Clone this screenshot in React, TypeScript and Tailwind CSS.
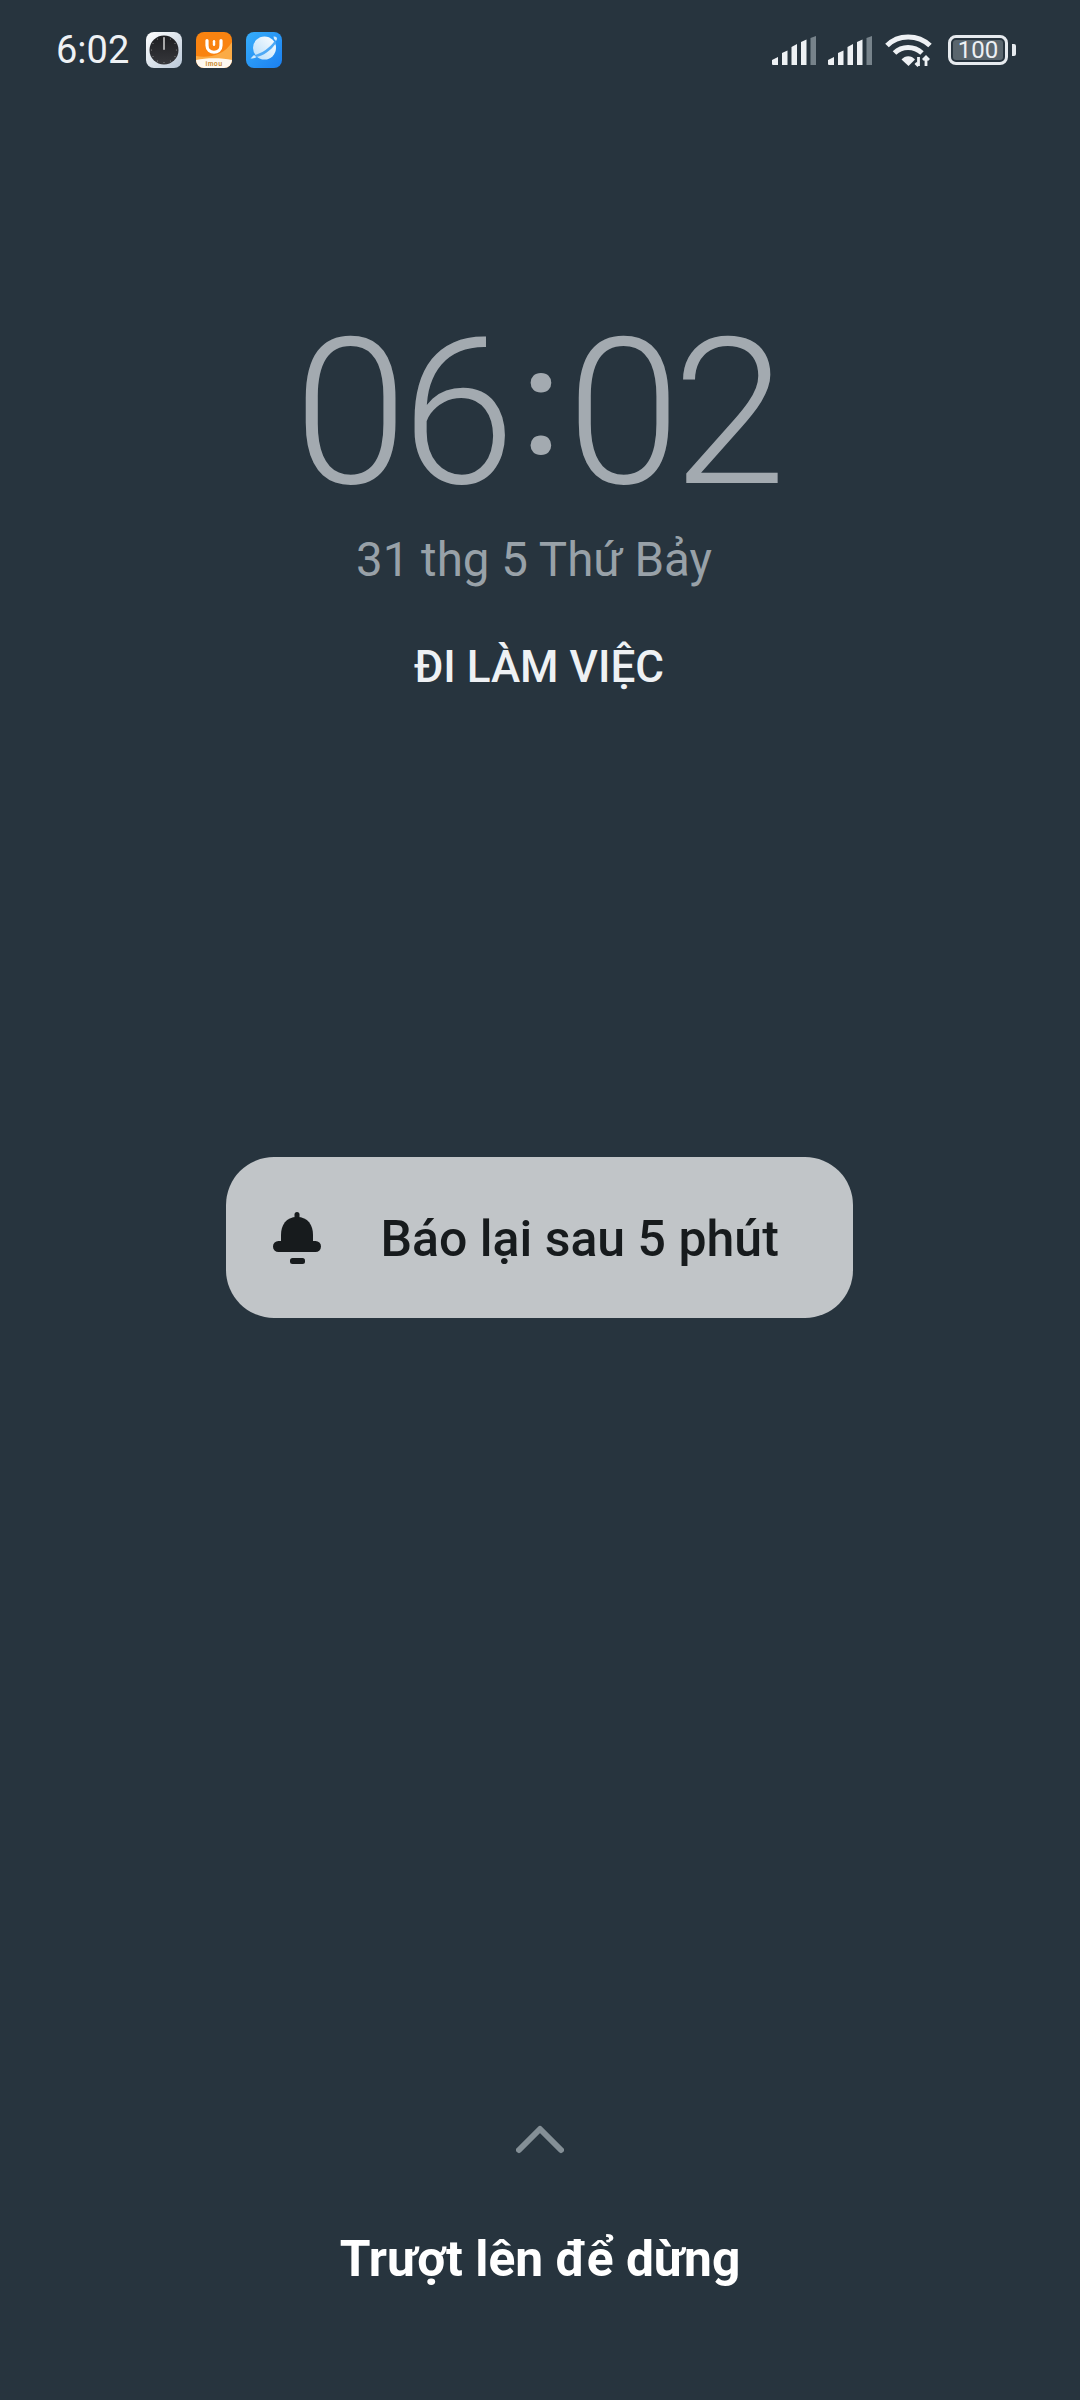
const font = { fontFamily: "Roboto, 'Noto Sans', sans-serif" };

function ClockIcon() {
  return (
    <svg width="36" height="36" viewBox="0 0 36 36">
      <defs>
        <linearGradient id="cg" x1="0" y1="0" x2="1" y2="1">
          <stop offset="0" stopColor="#ffffff" />
          <stop offset="1" stopColor="#b9c8d8" />
        </linearGradient>
        <linearGradient id="cd" x1="0" y1="0" x2="0" y2="1">
          <stop offset="0" stopColor="#1d1e21" />
          <stop offset="1" stopColor="#36373b" />
        </linearGradient>
      </defs>
      <rect width="36" height="36" rx="8" fill="url(#cg)" />
      <circle cx="18" cy="18" r="14.500" fill="url(#cd)" />
      <rect x="17.200" y="5" width="1.600" height="13" rx=".8" fill="#c9c9c9" />
      <g fill="#8b8b8b">
        <circle cx="24.500" cy="7" r=".6" /><circle cx="29" cy="11.500" r=".6" /><circle cx="30.500" cy="18" r=".6" />
        <circle cx="29" cy="24.500" r=".6" /><circle cx="24.500" cy="29" r=".6" /><circle cx="18" cy="30.500" r=".6" />
        <circle cx="11.500" cy="29" r=".6" /><circle cx="7" cy="24.500" r=".6" /><circle cx="5.500" cy="18" r=".6" />
        <circle cx="7" cy="11.500" r=".6" /><circle cx="11.500" cy="7" r=".6" />
      </g>
    </svg>
  );
}

function ImouIcon() {
  return (
    <svg width="36" height="36" viewBox="0 0 36 36">
      <defs>
        <clipPath id="ic"><rect width="36" height="36" rx="8" /></clipPath>
      </defs>
      <g clipPath="url(#ic)">
        <rect width="36" height="36" fill="#f98310" />
        <path d="M0 24 C12 26 28 24 36 10 V30 H0 Z" fill="#fbab45" />
        <path d="M0 28 C10 25.500 26 25.500 36 28 V36 H0 Z" fill="#fff9f0" />
        <path d="M11 8.500 V13.500 C11 22.500 25 22.500 25 13.500 V8.500" fill="none" stroke="#fff" strokeWidth="3.200" strokeLinecap="round" />
        <rect x="16.800" y="8" width="2.400" height="6" rx="1.200" fill="#fff" />
        <text x="18" y="34" textAnchor="middle" fontFamily="'Liberation Sans', sans-serif" fontWeight="700" fontSize="6.500" letterSpacing=".4" fill="#c98a2e">imou</text>
      </g>
    </svg>
  );
}

function BrowserIcon() {
  return (
    <svg width="36" height="36" viewBox="0 0 36 36">
      <defs>
        <linearGradient id="bg" x1="0" y1="0" x2="1" y2="1">
          <stop offset="0" stopColor="#36aefb" />
          <stop offset="1" stopColor="#1b7ff0" />
        </linearGradient>
        <linearGradient id="pl" x1="0" y1="1" x2="1" y2="0">
          <stop offset="0" stopColor="#b5ddfa" />
          <stop offset="1" stopColor="#ffffff" />
        </linearGradient>
      </defs>
      <rect width="36" height="36" rx="8" fill="url(#bg)" />
      <circle cx="18.500" cy="16" r="11.500" fill="url(#pl)" />
      <path d="M8 23 C15 22 24 16 29 8.500 C30 9.500 30 10.500 29.700 11.500 C25 18.500 17 24 10 25 Z" fill="#4ea9f5" />
      <path d="M4.500 26.500 C6 25 7 24 8 23 L10.500 25.200 C8.500 26.200 6 26.800 4.500 26.500 Z" fill="#cfe9fc" />
      <path d="M27.500 4.500 C29.500 4.200 31 5 31 6.500 C31 7.500 30.500 8.200 30 9 L28 7 Z" fill="#cfe9fc" />
    </svg>
  );
}

function Signal() {
  return (
    <svg width="44" height="29" viewBox="0 0 44 29">
      <g fill="#eef1f4">
        <path d="M0 24 L6 21 V29 H1 Q0 29 0 28 Z" />
        <path d="M10 29 V17 L15.500 14.500 V29 Z" />
        <path d="M19.500 29 V11 L25 8 V29 Z" />
        <path d="M29 29 V6 L34.500 3.500 V29 Z" />
      </g>
      <path d="M38.500 29 V2 L44 0 V29 Z" fill="#77838b" />
    </svg>
  );
}

function Wifi() {
  return (
    <svg width="48" height="34" viewBox="0 0 48 34">
      <g fill="none" stroke="#eef1f4" strokeWidth="5">
        <path d="M2 12.500 C13 1 33 1 45 12.500" />
        <path d="M9.500 20 C17 12.500 29 12.500 37 20" />
      </g>
      <path d="M16.500 26.500 C20 22 26.500 22 30 26.500 L23.500 33 Z" fill="#eef1f4" />
      <path d="M33.500 24 V33 M30.500 30 L33.500 33 M41 33 V24 M38 27 L41 24 L44 27" fill="none" stroke="#eef1f4" strokeWidth="2.800" />
    </svg>
  );
}

function Battery() {
  return (
    <div className="flex items-center gap-[4px]">
      <div className="flex h-[30px] w-[60px] items-center justify-center rounded-[8px] border-[3px] border-[#e6eaee] p-[2px]">
        <div className="flex h-full w-full items-center justify-center rounded-[3px] bg-[#59656d] text-[24px] leading-none text-[#eef1f4]">
          100
        </div>
      </div>
      <div className="h-[12px] w-[4px] rounded-r-[2px] bg-[#e6eaee]" />
    </div>
  );
}

function Bell() {
  return (
    <svg width="48" height="52" viewBox="0 0 48 52" fill="#171b1d">
      <rect x="21.500" y="0" width="5" height="18" rx="2.500" />
      <path d="M24 5 C13 5 8 13 8 23 V31 H40 V23 C40 13 35 5 24 5 Z" />
      <rect x="0" y="29" width="48" height="11" rx="5.500" />
      <rect x="17" y="46" width="15" height="6" rx="2.500" />
    </svg>
  );
}

export default function App() {
  return (
    <div style={font} className="flex h-[2400px] w-[1080px] flex-col items-center overflow-hidden bg-[#27343e]">
      <div className="flex h-[100px] w-full items-center justify-between pl-[56px] pr-[64px]">
        <div className="flex items-center">
          <span className="text-[38px] leading-none text-[#eef1f4]">6:02</span>
          <div className="ml-[17px] flex items-center gap-[14px]">
            <ClockIcon />
            <ImouIcon />
            <BrowserIcon />
          </div>
        </div>
        <div className="flex items-center">
          <Signal />
          <div className="ml-[12px]"><Signal /></div>
          <div className="ml-[13px]"><Wifi /></div>
          <div className="ml-[15px]"><Battery /></div>
        </div>
      </div>

      <div className="mr-[8px] mt-[193px] flex h-[240px] items-center justify-center text-[205px] font-light leading-none tracking-[-6px] text-[#a3aab0]">
        <span>06</span>
        <span className="ml-[12px] mr-[6px] -translate-y-[10px] text-[150px] font-medium tracking-normal">:</span>
        <span className="tracking-[-8px]">02</span>
      </div>
      <div className="mr-[12px] mt-[-5px] text-[47.5px] font-normal leading-[64px] text-[#98a1a8]">31 thg 5 Thứ Bảy</div>
      <div className="mr-[2px] mt-[45px] text-[44px] font-medium leading-[60px] text-[#eef1f4]">ĐI LÀM VIỆC</div>

      <div className="mr-[2px] mt-[460px] flex h-[161px] w-[627px] items-center rounded-[48px] bg-[#c1c5c8] pl-[47px]">
        <Bell />
        <span className="ml-[60px] pt-[3px] text-[50px] font-medium leading-none text-[#171b1d]">Báo lại sau 5 phút</span>
      </div>

      <svg className="mt-[806px]" width="48" height="30" viewBox="0 0 48 30" fill="none">
        <path d="M3 26 L24 5 L45 26" stroke="#848f96" strokeWidth="6" strokeLinecap="round" strokeLinejoin="round" />
      </svg>
      <div className="mt-[70px] text-[49.7px] font-bold leading-[70px] text-white">Trượt lên để dừng</div>
    </div>
  );
}
